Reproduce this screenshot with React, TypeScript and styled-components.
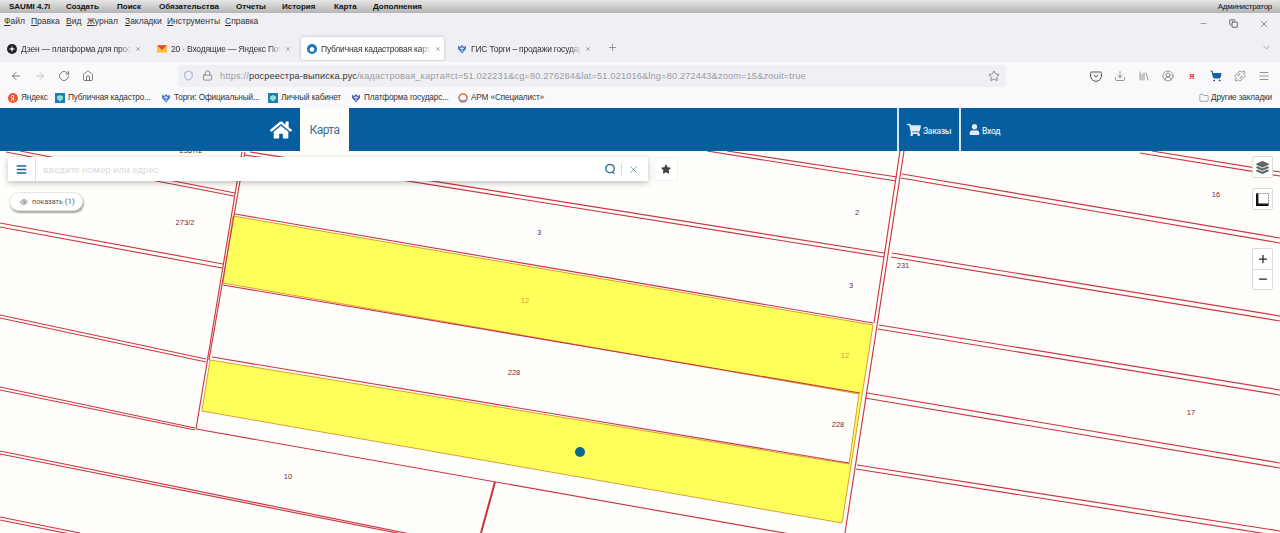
import React from "react";
import styled, { createGlobalStyle } from "styled-components";
import {
  ArrowLeft, ArrowRight, RotateCw, Home, Shield, Lock, Star, Download, Library,
  CircleUserRound, ShoppingCart, Puzzle, Menu, X, Plus, ChevronDown, Folder, Minus, Eye, Copy,
} from "lucide-react";
import { FaHome, FaShoppingCart, FaUser, FaStar, FaBars, FaLayerGroup } from "react-icons/fa";

const Global = createGlobalStyle`
  html, body { margin: 0; padding: 0; height: 533px; overflow: hidden; background: #fffefa; }
  * { box-sizing: border-box; }
`;

const Page = styled.div`
  width: 1280px; height: 533px; display: flex; flex-direction: column; overflow: hidden;
  font-family: "Liberation Sans", Arial, sans-serif; color: #222;
`;

/* OS bar */
const OsBar = styled.div`
  height: 13px; display: flex; align-items: center; padding: 0 8px 1px 9px;
  background: linear-gradient(#e6e6e6, #c9c9c9 60%, #b4b4b4);
  font-size: 8px; font-weight: 700; color: #111;
`;
const OsItem = styled.span<{ $w: number }>` width: ${p => p.$w}px; flex: none; white-space: nowrap; `;
const OsUser = styled.span` margin-left: auto; font-weight: 400; font-size: 8px; letter-spacing: -.27px; `;

/* Browser */
const Chrome = styled.div` background: #f0f0f4; display: flex; flex-direction: column; flex: none; `;
const MenuBar = styled.div`
  height: 23px; display: flex; align-items: flex-start; padding: 3px 0 0 4px; font-size: 8.5px; color: #333;
`;
const MenuItem = styled.span<{ $w: number }>`
  width: ${p => p.$w}px; flex: none; white-space: nowrap;
  &::first-letter { text-decoration: underline; }
`;
const WinControls = styled.div`
  margin-left: auto; display: flex; gap: 21px; padding: 3px 11px 0 0; color: #222;
`;
const TabRow = styled.div` height: 25px; display: flex; align-items: flex-start; padding: 1px 0 0 1px; gap: 7px; `;
const Tab = styled.div<{ $active?: boolean }>`
  width: 143px; height: 23px; flex: none; display: flex; align-items: center; gap: 4px; padding: 0 3px 0 6px;
  font-size: 8.5px; color: #333; border-radius: 3px;
  background: ${p => (p.$active ? "#fff" : "transparent")};
  box-shadow: ${p => (p.$active ? "0 0 3px rgba(0,0,0,.25)" : "none")};
`;
const TabIcon = styled.span` width: 10px; height: 10px; flex: none; display: flex; `;
const TabTitle = styled.span`
  width: 110px; flex: none; white-space: nowrap; letter-spacing: -.2px;
  -webkit-mask-image: linear-gradient(to right, #000 90%, transparent);
  mask-image: linear-gradient(to right, #000 90%, transparent);
`;
const NewTab = styled.span` display: flex; margin-left: 6px; padding-top: 5px; color: #555; `;
const TabEnd = styled.span` margin-left: auto; padding: 5px 8px 0 0; display: flex; color: #666; `;

const ToolBar = styled.div`
  height: 28px; display: flex; align-items: center; padding: 0 10px; background: #f9f9fb; border-top: 1px solid #eeeef2;
`;
const NavIcons = styled.div<{ $gap: number }>`
  display: flex; align-items: center; gap: ${p => p.$gap}px; color: #555;
`;
const UrlBox = styled.div`
  margin-left: 84px; width: 828px; height: 22px; background: #f0f0f4; border-radius: 3px;
  display: flex; align-items: center; padding: 0 6px 0 5px; font-size: 9.2px; color: #9a9aa2;
`;
const LockWrap = styled.span` display: flex; margin-left: 8px; color: #555; `;
const UrlText = styled.span` margin-left: 7px; white-space: nowrap; flex: 1; letter-spacing: .17px; b { font-weight: 400; color: #333; } `;
const RightIcons = styled(NavIcons)` margin-left: 84px; `;
const YaMark = styled.span` width: 12px; text-align: center; color: #e8344a; font-weight: 700; font-size: 9px; `;
const BookBar = styled.div`
  height: 19px; display: flex; align-items: center; padding: 0 8px 2px 8px; background: #f9f9fb; font-size: 8.2px; color: #333; letter-spacing: -.12px;
`;
const BookItem = styled.span<{ $w: number }>`
  width: ${p => p.$w}px; flex: none; display: flex; align-items: center; gap: 3px; white-space: nowrap;
`;
const BookRight = styled.span` margin-left: auto; display: flex; align-items: center; gap: 2px; `;

/* Site header */
const Header = styled.header`
  height: 43px; flex: none; background: #045e9f; display: flex; align-items: stretch; color: #fff;
`;
const HomeLink = styled.a` margin-left: 270px; width: 30px; display: flex; align-items: center; color: #fff; `;
const MapTab = styled.a`
  width: 49px; background: #fffefb; color: #3d6f92; font: 400 12px Roboto, sans-serif; letter-spacing: -.55px;
  display: flex; align-items: center; justify-content: center;
`;
const HeadBtn = styled.a<{ $first?: boolean; $w: number }>`
  ${p => (p.$first ? "margin-left: auto;" : "")}
  width: ${p => p.$w}px; display: flex; align-items: center; gap: 2px; padding: 0 0 0 8px;
  border-left: 2px solid #d6e4ee; font: 500 8.5px Roboto, sans-serif; letter-spacing: -.3px; color: #dfeaf3;
  span { padding-top: 2px; }
`;

/* Map */
const MapArea = styled.main` position: relative; flex: 1; overflow: hidden; background: #fffefa; `;
const MapSvg = styled.svg` position: absolute; inset: 0; width: 1280px; height: 382px; display: block; `;
const Parcel = styled.text<{ $c?: string }>`
  font: 400 7.5px "Liberation Sans", sans-serif; fill: ${p => p.$c || "#6e2a3e"}; text-anchor: middle;
`;

const SearchBar = styled.div`
  position: absolute; left: 8px; top: 6px; width: 640px; height: 24px; background: #fff;
  display: flex; align-items: center; box-shadow: 0 2px 6px rgba(0,0,0,.25);
`;
const BurgerCell = styled.div`
  width: 28px; height: 100%; display: flex; align-items: center; justify-content: center;
  border-right: 1px solid #e2e2e2; color: #1a6a90;
`;
const SearchInput = styled.span`
  flex: 1; padding-left: 7px; font: 400 9.6px Roboto, sans-serif; color: #dcdcdc;
`;
const SearchIcons = styled.div`
  display: flex; align-items: center; color: #3b7a9a; padding-right: 9px; gap: 5px;
`;
const VSep = styled.i` width: 1px; height: 12px; background: #d8d8d8; margin-right: 1px; `;
const StarBtn = styled.button`
  position: absolute; left: 654px; top: 6px; width: 24px; height: 24px; padding: 0; border: 1px solid #f1f1f1;
  border-radius: 2px; background: #fff; color: #444; display: flex; align-items: center; justify-content: center;
`;
const ShowBtn = styled.button`
  position: absolute; left: 9px; top: 41px; width: 74px; height: 19px; padding: 0 0 0 10px; border: 1px solid #e6e6e6; border-radius: 10px;
  background: #fff; box-shadow: 1px 2px 2px rgba(0,0,0,.35); display: flex; align-items: center; gap: 4px;
  font: 400 7.2px Roboto, sans-serif; color: #555;
  b { font-weight: 400; font-size: 8px; color: #555; }
`;
const MapCtl = styled.button<{ $top: number }>`
  position: absolute; left: 1252px; top: ${p => p.$top}px; width: 21px; height: 22px; padding: 0; background: #fff;
  border: 1px solid #dcdcdc; border-radius: 2px; display: flex; align-items: center; justify-content: center; color: #222;
`;
const ZoomGroup = styled.div`
  position: absolute; left: 1252px; top: 97px; width: 21px; height: 42px; background: #fff;
  border: 1px solid #dcdcdc; border-radius: 2px; display: flex; flex-direction: column;
`;
const ZoomBtn = styled.button`
  flex: 1; padding: 0; border: 0; background: none; color: #222; display: flex; align-items: center; justify-content: center;
  & + & { border-top: 1px solid #dcdcdc; }
`;

/* small favicons */
const Dzen = () => (
  <svg width="10" height="10" viewBox="0 0 10 10"><circle cx="5" cy="5" r="5" fill="#222" /><path d="M5 1.5 5.7 4.3 8.5 5 5.7 5.7 5 8.5 4.3 5.7 1.5 5 4.3 4.3Z" fill="#fff" /></svg>
);
const Mail = () => (
  <svg width="11" height="10" viewBox="0 0 11 10"><rect y="1" width="11" height="8" fill="#f8c33a" /><path d="M0 1h11L5.5 6Z" fill="#e8443a" /></svg>
);
const Globe = () => (
  <svg width="10" height="10" viewBox="0 0 10 10"><circle cx="5" cy="5" r="5" fill="#1a78b8" /><path d="M2 5.2 5 2.6l3 2.6H7v2.2H3V5.2Z" fill="#fff" /></svg>
);
const Crest = ({ c = "#4a78c8" }: { c?: string }) => (
  <svg width="10" height="10" viewBox="0 0 10 10"><path d="M1 1.5 3 3l2-2 2 2 2-1.5V5L5 9.5 1 5Z" fill={c} /><path d="M5 3v5M3 4.5h4" stroke="#fff" strokeWidth=".7" /></svg>
);
const SquareFav = () => (
  <svg width="10" height="10" viewBox="0 0 10 10"><rect width="10" height="10" fill="#1b7fb0" /><path d="M2 3.5 5 2l3 1.5V6L5 8.5 2 6Z" fill="#8fe0d8" /></svg>
);
const YaRound = () => (
  <svg width="10" height="10" viewBox="0 0 10 10"><circle cx="5" cy="5" r="5" fill="#e2593a" /><path d="M5.600 8V2.400H5C3.900 2.400 3.400 3 3.400 3.800s.4 1.200 1 1.500L3.200 8" fill="none" stroke="#fff" strokeWidth=".9" /></svg>
);
const Arm = () => (
  <svg width="10" height="10" viewBox="0 0 10 10"><circle cx="5" cy="5" r="4" fill="none" stroke="#d8734a" strokeWidth="1.6" /><path d="M1 6.500c2 1.600 6 1.600 8 0" stroke="#7a9ac8" strokeWidth="1.4" fill="none" /></svg>
);
const QSearch = () => (
  <svg width="12" height="12" viewBox="0 0 12 12" fill="none" stroke="currentColor" strokeWidth="1.5"><circle cx="6" cy="5.600" r="4.200" /><path d="M8.400 8.800 10.400 10.800" /></svg>
);
const PocketIcon = () => (
  <svg width="12" height="12" viewBox="0 0 12 12" fill="none" stroke="#555" strokeWidth="1"><path d="M1.500 2h9a.8.8 0 0 1 .8.8V6A5.200 5.200 0 0 1 .7 6V2.800a.8.8 0 0 1 .8-.8Z" /><path d="M3.800 5 6 7l2.200-2" /></svg>
);
const CropIcon = () => (
  <svg width="15" height="15" viewBox="0 0 15 15" fill="none"><path d="M2 1.500h11.500V13" stroke="#666" strokeWidth=".8" strokeDasharray="1.500 1" /><path d="M2.200 1.500v11.300h11.300" stroke="#111" strokeWidth="2.400" /></svg>
);

type L = [number, number, number, number];
/* Double boundary lines of the cadastral parcels, page coordinates */
const lines: L[] = [
  [0, 223, 223, 264], [0, 227, 222, 268],
  [0, 315, 206, 359], [0, 318, 206, 362],
  [0, 387, 195, 428], [0, 390, 195, 430],
  [0, 451, 420, 536], [0, 454, 412, 536],
  [0, 517, 80, 533], [0, 520, 70, 534],
  [20, 151, 235, 193], [6, 152, 234, 196],
  [250, 152, 884, 253], [245, 155, 884, 257],
  [727, 151, 897, 177], [707, 151, 896, 181],
  [1152, 151, 1280, 172], [1140, 153, 1280, 176],
  [902, 174, 1280, 238], [901, 178, 1280, 243],
  [892, 253, 1280, 316], [891, 257, 1280, 321],
  [879, 325, 1280, 390], [878, 329, 1280, 395],
  [867, 393, 1280, 463], [865, 398, 1280, 468],
  [857, 465, 1280, 531], [856, 469, 1280, 536],
  /* single lines */
  [235, 214, 873, 323], [223, 285, 860, 393], [212, 357, 849, 463],
  [196, 429, 790, 534],
  [242, 152, 196, 429], [245, 152, 209, 360],
  [900, 151, 874, 323], [904, 151, 845, 533],
];

const App: React.FC = () => (
  <Page>
    <Global />
    <OsBar>
      <OsItem $w={57}>SAUMI 4.7i</OsItem>
      <OsItem $w={51}>Создать</OsItem>
      <OsItem $w={42}>Поиск</OsItem>
      <OsItem $w={77}>Обязательства</OsItem>
      <OsItem $w={46}>Отчеты</OsItem>
      <OsItem $w={52}>История</OsItem>
      <OsItem $w={39}>Карта</OsItem>
      <OsItem $w={60}>Дополнения</OsItem>
      <OsUser>Администратор</OsUser>
    </OsBar>
    <Chrome>
      <MenuBar>
        <MenuItem $w={27}>Файл</MenuItem>
        <MenuItem $w={35}>Правка</MenuItem>
        <MenuItem $w={21}>Вид</MenuItem>
        <MenuItem $w={38}>Журнал</MenuItem>
        <MenuItem $w={42}>Закладки</MenuItem>
        <MenuItem $w={58}>Инструменты</MenuItem>
        <MenuItem $w={40}>Справка</MenuItem>
        <WinControls>
          <Minus size={9} strokeWidth={1} />
          <Copy size={9} strokeWidth={1.8} />
          <X size={10} strokeWidth={1.2} />
        </WinControls>
      </MenuBar>
      <TabRow>
        <Tab><TabIcon><Dzen /></TabIcon><TabTitle>Дзен — платформа для просм</TabTitle><X size={10} strokeWidth={1.6} /></Tab>
        <Tab><TabIcon><Mail /></TabIcon><TabTitle>20 · Входящие — Яндекс Почт</TabTitle><X size={10} strokeWidth={1.6} /></Tab>
        <Tab $active><TabIcon><Globe /></TabIcon><TabTitle>Публичная кадастровая карта</TabTitle><X size={10} strokeWidth={1.6} /></Tab>
        <Tab><TabIcon><Crest /></TabIcon><TabTitle>ГИС Торги – продажи государ</TabTitle><X size={10} strokeWidth={1.6} /></Tab>
        <NewTab><Plus size={11} strokeWidth={1.2} /></NewTab>
        <TabEnd><ChevronDown size={11} strokeWidth={1.2} /></TabEnd>
      </TabRow>
      <ToolBar>
        <NavIcons $gap={12}>
          <ArrowLeft size={12} strokeWidth={1.5} />
          <ArrowRight size={12} strokeWidth={1.5} color="#b5b5b8" />
          <RotateCw size={12} strokeWidth={1.5} />
          <Home size={12} strokeWidth={1.5} />
        </NavIcons>
        <UrlBox>
          <Shield size={11} strokeWidth={1.3} color="#5a78c8" />
          <LockWrap><Lock size={11} strokeWidth={1.3} /></LockWrap>
          <UrlText>https://<b>росреестра-выписка.рус</b>/кадастровая_карта#ct=51.022231&amp;cg=80.276284&amp;lat=51.021016&amp;lng=80.272443&amp;zoom=15&amp;zouit=true</UrlText>
          <Star size={12} strokeWidth={1.2} color="#444" />
        </UrlBox>
        <RightIcons $gap={12}>
          <PocketIcon />
          <Download size={12} strokeWidth={1.2} />
          <Library size={12} strokeWidth={1.2} />
          <CircleUserRound size={12} strokeWidth={1.2} />
          <YaMark>я</YaMark>
          <ShoppingCart size={12} strokeWidth={2} color="#1a5f9e" fill="#1a5f9e" />
          <Puzzle size={12} strokeWidth={1.2} />
          <Menu size={12} strokeWidth={1.2} />
        </RightIcons>
      </ToolBar>
      <BookBar>
        <BookItem $w={47}><YaRound />Яндекс</BookItem>
        <BookItem $w={106}><SquareFav />Публичная кадастро...</BookItem>
        <BookItem $w={107}><Crest />Торги: Официальный...</BookItem>
        <BookItem $w={83}><SquareFav />Личный кабинет</BookItem>
        <BookItem $w={107}><Crest c="#5a6ab0" />Платформа государс...</BookItem>
        <BookItem $w={90}><Arm />АРМ «Специалист»</BookItem>
        <BookRight><Folder size={10} strokeWidth={1} />Другие закладки</BookRight>
      </BookBar>
    </Chrome>
    <Header>
      <HomeLink><FaHome size={22} /></HomeLink>
      <MapTab>Карта</MapTab>
      <HeadBtn $first $w={62}><FaShoppingCart size={14} /><span>Заказы</span></HeadBtn>
      <HeadBtn $w={321}><FaUser size={11} /><span>Вход</span></HeadBtn>
    </Header>
    <MapArea>
      <MapSvg viewBox="0 151 1280 382">
        <path d="M233 216 873 325 842 523 202 411 210 360 849 464 859 394 223 283Z" fill="#ffff5c" stroke="#d8a030" strokeWidth="1" />
        {lines.map(([a, b, c, d], i) => (
          <line key={i} x1={a} y1={b} x2={c} y2={d} stroke="#cc3641" strokeWidth={1.15} />
        ))}
        <line x1={495} y1={482} x2={481} y2={533} stroke="#c8303c" strokeWidth={2} />
        <Parcel x={191} y={153} $c="#333">2357/2</Parcel>
        <Parcel x={185} y={225}>273/2</Parcel>
        <Parcel x={539} y={235}>3</Parcel>
        <Parcel x={857} y={215}>2</Parcel>
        <Parcel x={851} y={288}>3</Parcel>
        <Parcel x={903} y={268}>231</Parcel>
        <Parcel x={1216} y={197}>16</Parcel>
        <Parcel x={1191} y={415}>17</Parcel>
        <Parcel x={525} y={303} $c="#d8a030">12</Parcel>
        <Parcel x={845} y={358} $c="#d8a030">12</Parcel>
        <Parcel x={514} y={375}>228</Parcel>
        <Parcel x={838} y={427}>228</Parcel>
        <Parcel x={288} y={479}>10</Parcel>
        <circle cx={580} cy={452} r={5} fill="#0f6690" />
      </MapSvg>
      <SearchBar>
        <BurgerCell><FaBars size={11} /></BurgerCell>
        <SearchInput>введите номер или адрес</SearchInput>
        <SearchIcons>
          <QSearch />
          <VSep />
          <X size={11} strokeWidth={1.5} />
        </SearchIcons>
      </SearchBar>
      <StarBtn><FaStar size={10} /></StarBtn>
      <ShowBtn><Eye size={8} /><span>показать <b>(1)</b></span></ShowBtn>
      <MapCtl $top={5}><FaLayerGroup size={13} color="#666" /></MapCtl>
      <MapCtl $top={37}><CropIcon /></MapCtl>
      <ZoomGroup>
        <ZoomBtn><Plus size={12} strokeWidth={2.5} /></ZoomBtn>
        <ZoomBtn><Minus size={12} strokeWidth={2.5} /></ZoomBtn>
      </ZoomGroup>
    </MapArea>
  </Page>
);

export default App;
